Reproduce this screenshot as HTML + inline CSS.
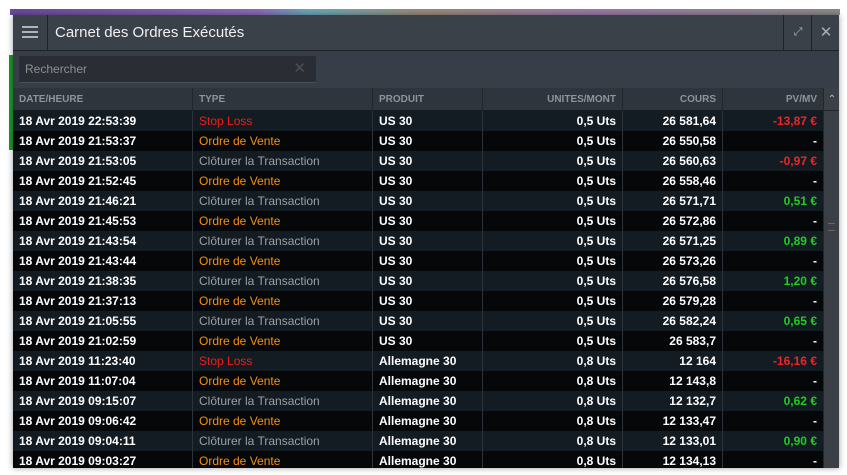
<!DOCTYPE html>
<html><head><style>
body{margin:0;width:847px;height:475px;background:#fff;overflow:hidden;font-family:"Liberation Sans",sans-serif;position:relative}
.top{position:absolute;left:10px;top:9px;width:830px;height:6px;background:linear-gradient(90deg,#6a4a9a 0,#8a6ab8 30%,#6aa8b8 36%,#9a8a7a 50%,#9a7aa8 70%,#8a8a8a 100%)}
.green{position:absolute;left:9px;top:55px;width:4px;height:95px;background:#1a9a2a}
.win{position:absolute;left:13px;top:15px;width:826px;height:453px;background:#383e47;box-shadow:0 0 6px rgba(0,0,0,.4);overflow:hidden}
.title{position:absolute;left:0;top:0;width:826px;height:35px;background:#3b4149;border-bottom:1px solid #1e2328}
.menu{position:absolute;left:0;top:0;width:34px;height:35px;border-right:1px solid #1e2328}
.menu i{position:absolute;left:9px;width:16px;height:2px;background:#aeb3b8}
.title h1{position:absolute;left:42px;top:9px;margin:0;font-size:15px;font-weight:normal;color:#f0f0f0}
.btn{position:absolute;top:0;width:28px;height:35px;border-left:1px solid #1e2328;color:#aab;font-size:15px;text-align:center;line-height:35px}
.search{position:absolute;left:6px;top:41px;width:297px;height:26px;background:#2a2e34;border-bottom:1px solid #4a5058;border-radius:2px}
.search span{position:absolute;left:6px;top:6px;font-size:12px;color:#8a9098}
.search b{position:absolute;right:10px;top:3px;color:#4a5058;font-weight:normal;font-size:15px}
table{position:absolute;left:0;top:73px;width:810px;border-collapse:collapse;font-size:12px}
th{height:22px;background:#2f353d;color:#8e949b;font-size:10px;font-weight:bold;text-align:left;padding:0 6px;border-left:1px solid #22272d;border-bottom:1px solid #1a1e22}
td{height:20px;padding:0 6px;color:#fff;font-weight:bold;border-left:1px solid #2d333a;white-space:nowrap}
tr:nth-child(even) td{background:#141c23}
tr:nth-child(odd) td{background:#050709}
.r{text-align:right}
.sl{color:#f21c1c;font-weight:normal}.ov{color:#f6920e;font-weight:normal}.cl{color:#9ba0a6;font-weight:normal}
.neg{color:#ee2626}.pos{color:#22cc22}
.sb{position:absolute;left:810px;top:73px;width:16px;height:380px;background:#3b4047;border-left:1px solid #22272d}
.sb .up{height:22px;border-bottom:1px solid #22272d;color:#bbb;font-size:10px;text-align:center;line-height:24px}
</style></head><body>
<div class="top"></div><div class="green"></div>
<div class="win">
<div class="title"><div class="menu"><i style="top:11px"></i><i style="top:16px"></i><i style="top:21px"></i></div>
<h1>Carnet des Ordres Exécutés</h1>
<div class="btn" style="left:770px;font-size:11px">⤢</div><div class="btn" style="left:798px">✕</div></div>
<div class="search"><span>Rechercher</span><b>✕</b></div>
<table>
<tr><th style="width:167px;border-left:0">DATE/HEURE</th><th style="width:167px">TYPE</th><th style="width:97px">PRODUIT</th><th class="r" style="width:127px">UNITES/MONT</th><th class="r" style="width:87px">COURS</th><th class="r">PV/MV</th></tr>
<tr><td style="border-left:0">18 Avr 2019 22:53:39</td><td class="sl">Stop Loss</td><td>US 30</td><td class="r">0,5 Uts</td><td class="r">26 581,64</td><td class="r neg">-13,87 €</td></tr>
<tr><td style="border-left:0">18 Avr 2019 21:53:37</td><td class="ov">Ordre de Vente</td><td>US 30</td><td class="r">0,5 Uts</td><td class="r">26 550,58</td><td class="r">-</td></tr>
<tr><td style="border-left:0">18 Avr 2019 21:53:05</td><td class="cl">Clôturer la Transaction</td><td>US 30</td><td class="r">0,5 Uts</td><td class="r">26 560,63</td><td class="r neg">-0,97 €</td></tr>
<tr><td style="border-left:0">18 Avr 2019 21:52:45</td><td class="ov">Ordre de Vente</td><td>US 30</td><td class="r">0,5 Uts</td><td class="r">26 558,46</td><td class="r">-</td></tr>
<tr><td style="border-left:0">18 Avr 2019 21:46:21</td><td class="cl">Clôturer la Transaction</td><td>US 30</td><td class="r">0,5 Uts</td><td class="r">26 571,71</td><td class="r pos">0,51 €</td></tr>
<tr><td style="border-left:0">18 Avr 2019 21:45:53</td><td class="ov">Ordre de Vente</td><td>US 30</td><td class="r">0,5 Uts</td><td class="r">26 572,86</td><td class="r">-</td></tr>
<tr><td style="border-left:0">18 Avr 2019 21:43:54</td><td class="cl">Clôturer la Transaction</td><td>US 30</td><td class="r">0,5 Uts</td><td class="r">26 571,25</td><td class="r pos">0,89 €</td></tr>
<tr><td style="border-left:0">18 Avr 2019 21:43:44</td><td class="ov">Ordre de Vente</td><td>US 30</td><td class="r">0,5 Uts</td><td class="r">26 573,26</td><td class="r">-</td></tr>
<tr><td style="border-left:0">18 Avr 2019 21:38:35</td><td class="cl">Clôturer la Transaction</td><td>US 30</td><td class="r">0,5 Uts</td><td class="r">26 576,58</td><td class="r pos">1,20 €</td></tr>
<tr><td style="border-left:0">18 Avr 2019 21:37:13</td><td class="ov">Ordre de Vente</td><td>US 30</td><td class="r">0,5 Uts</td><td class="r">26 579,28</td><td class="r">-</td></tr>
<tr><td style="border-left:0">18 Avr 2019 21:05:55</td><td class="cl">Clôturer la Transaction</td><td>US 30</td><td class="r">0,5 Uts</td><td class="r">26 582,24</td><td class="r pos">0,65 €</td></tr>
<tr><td style="border-left:0">18 Avr 2019 21:02:59</td><td class="ov">Ordre de Vente</td><td>US 30</td><td class="r">0,5 Uts</td><td class="r">26 583,7</td><td class="r">-</td></tr>
<tr><td style="border-left:0">18 Avr 2019 11:23:40</td><td class="sl">Stop Loss</td><td>Allemagne 30</td><td class="r">0,8 Uts</td><td class="r">12 164</td><td class="r neg">-16,16 €</td></tr>
<tr><td style="border-left:0">18 Avr 2019 11:07:04</td><td class="ov">Ordre de Vente</td><td>Allemagne 30</td><td class="r">0,8 Uts</td><td class="r">12 143,8</td><td class="r">-</td></tr>
<tr><td style="border-left:0">18 Avr 2019 09:15:07</td><td class="cl">Clôturer la Transaction</td><td>Allemagne 30</td><td class="r">0,8 Uts</td><td class="r">12 132,7</td><td class="r pos">0,62 €</td></tr>
<tr><td style="border-left:0">18 Avr 2019 09:06:42</td><td class="ov">Ordre de Vente</td><td>Allemagne 30</td><td class="r">0,8 Uts</td><td class="r">12 133,47</td><td class="r">-</td></tr>
<tr><td style="border-left:0">18 Avr 2019 09:04:11</td><td class="cl">Clôturer la Transaction</td><td>Allemagne 30</td><td class="r">0,8 Uts</td><td class="r">12 133,01</td><td class="r pos">0,90 €</td></tr>
<tr><td style="border-left:0">18 Avr 2019 09:03:27</td><td class="ov">Ordre de Vente</td><td>Allemagne 30</td><td class="r">0,8 Uts</td><td class="r">12 134,13</td><td class="r">-</td></tr>
</table>
<div class="sb"><div class="up">⌃</div><div style="position:absolute;top:135px;left:4px;width:7px;height:6px;border-top:1px solid #666;border-bottom:1px solid #666"></div></div>
</div>
</body></html>
